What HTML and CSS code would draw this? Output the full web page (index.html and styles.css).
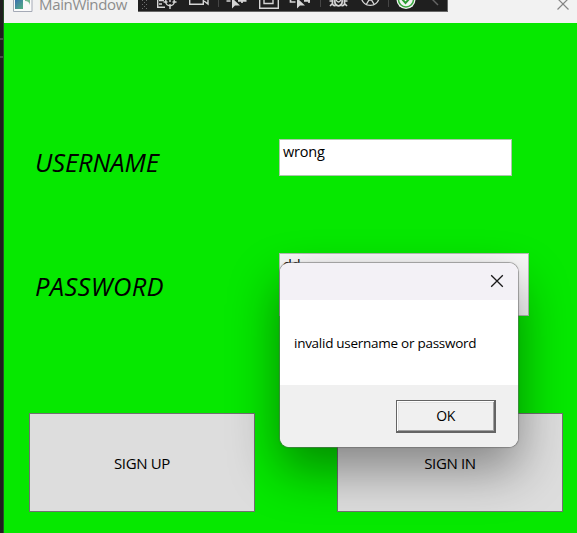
FILE: index.html
```html
<!DOCTYPE html>
<html lang="en">
<head>
<meta charset="utf-8">
<title>MainWindow</title>
<link rel="stylesheet" href="styles.css">
</head>
<body>
<div class="desktop">
  <div class="backdrop"><i class="line"></i><i class="line"></i></div>
  <main class="window">
    <header class="titlebar">
      <svg class="app-icon" width="20" height="12" viewBox="0 0 20 12">
        <defs><linearGradient id="g" x1="0" y1="0" x2="1" y2="1"><stop offset="0" stop-color="#3b70b0"/><stop offset="1" stop-color="#55b082"/></linearGradient></defs>
        <path d="M.5 0v11.500h18.500V0" fill="#fafafa" stroke="#a5aab6"/>
        <path d="M2 0h8v9H2z" fill="url(#g)"/>
        <path d="M12 0h5v5q-1-4-5-4z" fill="#76bd91"/>
      </svg>
      <span class="title">MainWindow</span>
      <svg class="close" width="14" height="11" viewBox="0 0 14 11"><path d="M1.500-1.500l11 11M12.500-1.500l-11 11" fill="none" stroke="#858585" stroke-width="1.200"/></svg>
    </header>
    <form class="form">
      <label class="label name-label" for="user">USERNAME</label>
      <div class="field user-field" id="user">wrong</div>
      <label class="label pass-label" for="pass">PASSWORD</label>
      <div class="field pass-field" id="pass">dd</div>
      <div class="actions">
        <button type="button" class="action">SIGN UP</button>
        <button type="button" class="action">SIGN IN</button>
      </div>
    </form>
  </main>
  <div class="debugbar">
    <svg width="309" height="12" viewBox="0 0 309 12" fill="none" stroke="#d5d5d5" stroke-width="1.400">
      <g fill="#707070" stroke="none"><path d="M4 0h1v1H4zM8 0h1v1H8zM6 2h1v1H6zM4 4h1v1H4zM8 4h1v1H8zM6 6h1v1H6zM4 8h1v1H4zM8 8h1v1H8z"/></g>
      <path d="M19.700 0v7.300H27M21 .5h5M21 4h3"/>
      <circle cx="32" cy="1.500" r="4.300"/><path d="M32 4v5M25.500 2h4M34.500 2h4M32 0v2"/>
      <path d="M51.700 0v4.300h13.600V0M66 1l4 3V0"/>
      <path d="M80.500 0v7M165.500 0v0M182.500 0v7M250.500 0v7" stroke="#454545" stroke-width="1"/>
      <path d="M94-2v10.500l3-3h5z" fill="#d5d5d5" stroke="none"/><path d="M88.500 1h4M100 .8h8.500M104 0v3" stroke-width="1.700"/>
      <path d="M121.700 0v8.200h18.600V0M126 0v3.500h9V0"/>
      <path d="M159-2v10.500l3-3h5z" fill="#d5d5d5" stroke="none"/><path d="M152.500 0v2h5M166 .8h6M171 0v3" stroke-width="1.700"/>
      <path d="M194.500 0v4q1 2.200 3 1.500M206.500 0v4q-1 2.200-3 1.500M197 0q-1 5 3.500 6 4.500-1 3.500-6M191.500 1h4M205.500 1h4M192 6l3-3M209 6l-3-3" stroke-width="1.700"/><path d="M198 0q2.500 4 5 0"/>
      <path d="M223.500-1.500a9 9 0 0 0 17.500 0"/><path d="M228 5l3-5h2.500l3 5M229-1h7"/>
      <circle cx="268" cy="-.5" r="9.500" fill="#f4f4f4" stroke="none"/><circle cx="268" cy="-.5" r="7.500" stroke="#39a83e" stroke-width="1.500"/><path d="M264-1l3.500 4L272-2" stroke="#2b9b32" stroke-width="2"/>
      <path d="M294-1l6 6" stroke="#656565"/>
    </svg>
  </div>
  <section class="dialog" role="dialog">
    <header class="dialog-head"><svg width="14" height="14" viewBox="0 0 14 14"><path d="M1.200 1.200l11.600 11.600M12.800 1.200L1.200 12.800" stroke="#181818" stroke-width="1.300"/></svg></header>
    <p class="message">invalid username or password</p>
    <footer class="dialog-foot"><button type="button" class="ok">OK</button></footer>
  </section>
</div>
</body>
</html>
```
FILE: styles.css
```css
* { box-sizing: border-box; }
body { margin: 0; font-family: "Open Sans", "Noto Sans", sans-serif; color: #000; }
.desktop { position: relative; width: 577px; height: 533px; overflow: hidden; display: flex; }
.backdrop { width: 4px; background: #1f1f1f; border-right: 1px solid #27502a; padding-top: 38px; display: flex; flex-direction: column; gap: 16px; }
.line { height: 2px; background: #4a4a4a; }
.window { flex: 1; display: flex; flex-direction: column; background: #06e800; }
.titlebar { height: 23px; background: #f2f2f2; display: flex; align-items: flex-start; padding: 0 7px 0 9px; }
.title { margin-left: 6px; font-size: 15px; line-height: 20px; margin-top: -6px; color: #8d8d8d; letter-spacing: -.35px; }
.close { margin-left: auto; }
.form { flex: 1; display: grid; grid-template-columns: 275px 250px; grid-template-rows: 114px 160px 99px; padding-top: 116px; align-content: start; }
.label { font-size: 25.500px; font-style: italic; line-height: 36px; padding-left: 31px; }
.name-label { margin-top: 5px; letter-spacing: -.1px; }
.pass-label { margin-top: 15px; letter-spacing: .35px; }
.field { background: #fff; border: 1px solid #abc7ab; font-size: 14.500px; line-height: 20px; padding: 2px 3px; letter-spacing: -.2px; }
.user-field { width: 233px; height: 37px; }
.pass-field { width: 250px; height: 63px; background: #f8f8f8; border: 1px solid #b3bdb3; padding-top: 1px; }
.actions { grid-column: 1 / 3; display: flex; gap: 82px; padding-left: 25px; }
.action { flex: none; width: 226px; height: 99px; padding: 1px 0 0; border: 1px solid #707070; background: #ddd; font: 15px/20px "Open Sans", sans-serif; letter-spacing: -.35px; color: #000; }
.debugbar { position: absolute; left: 138px; top: 0; width: 310px; height: 12px; background: #1f1f1f; border-bottom: 1px solid #666; border-right: 1px solid #666; overflow: hidden; }
.debugbar svg { display: block; }
.dialog { position: absolute; left: 279px; top: 262px; width: 240px; height: 186px; border: 1px solid rgba(110,110,110,.5); border-radius: 10px; background: #fff; background-clip: padding-box; display: flex; flex-direction: column; overflow: hidden; box-shadow: 0 22px 50px rgba(0,0,0,.4), 0 0 2px rgba(0,0,0,.1); }
.dialog-head { height: 37px; background: #f3f1f6; display: flex; justify-content: flex-end; padding: 11px 14px 0 0; }
.message { margin: 0; height: 85px; padding: 33px 0 0 14px; font-size: 13.500px; line-height: 20px; letter-spacing: -.27px; white-space: nowrap; }
.dialog-foot { flex: 1; background: #f0f0f0; display: flex; justify-content: flex-end; padding: 15px 22px 0 0; }
.ok { width: 100px; height: 33px; padding: 0; border: solid #646464; border-width: 1px 2px 2px 1px; background: #f0f0f0; box-shadow: inset 1px 1px #fff, inset -1px -1px #a0a0a0, inset 2px 2px #e3e3e3; font: 14px/20px "Open Sans", sans-serif; letter-spacing: -.5px; color: #000; }
```
